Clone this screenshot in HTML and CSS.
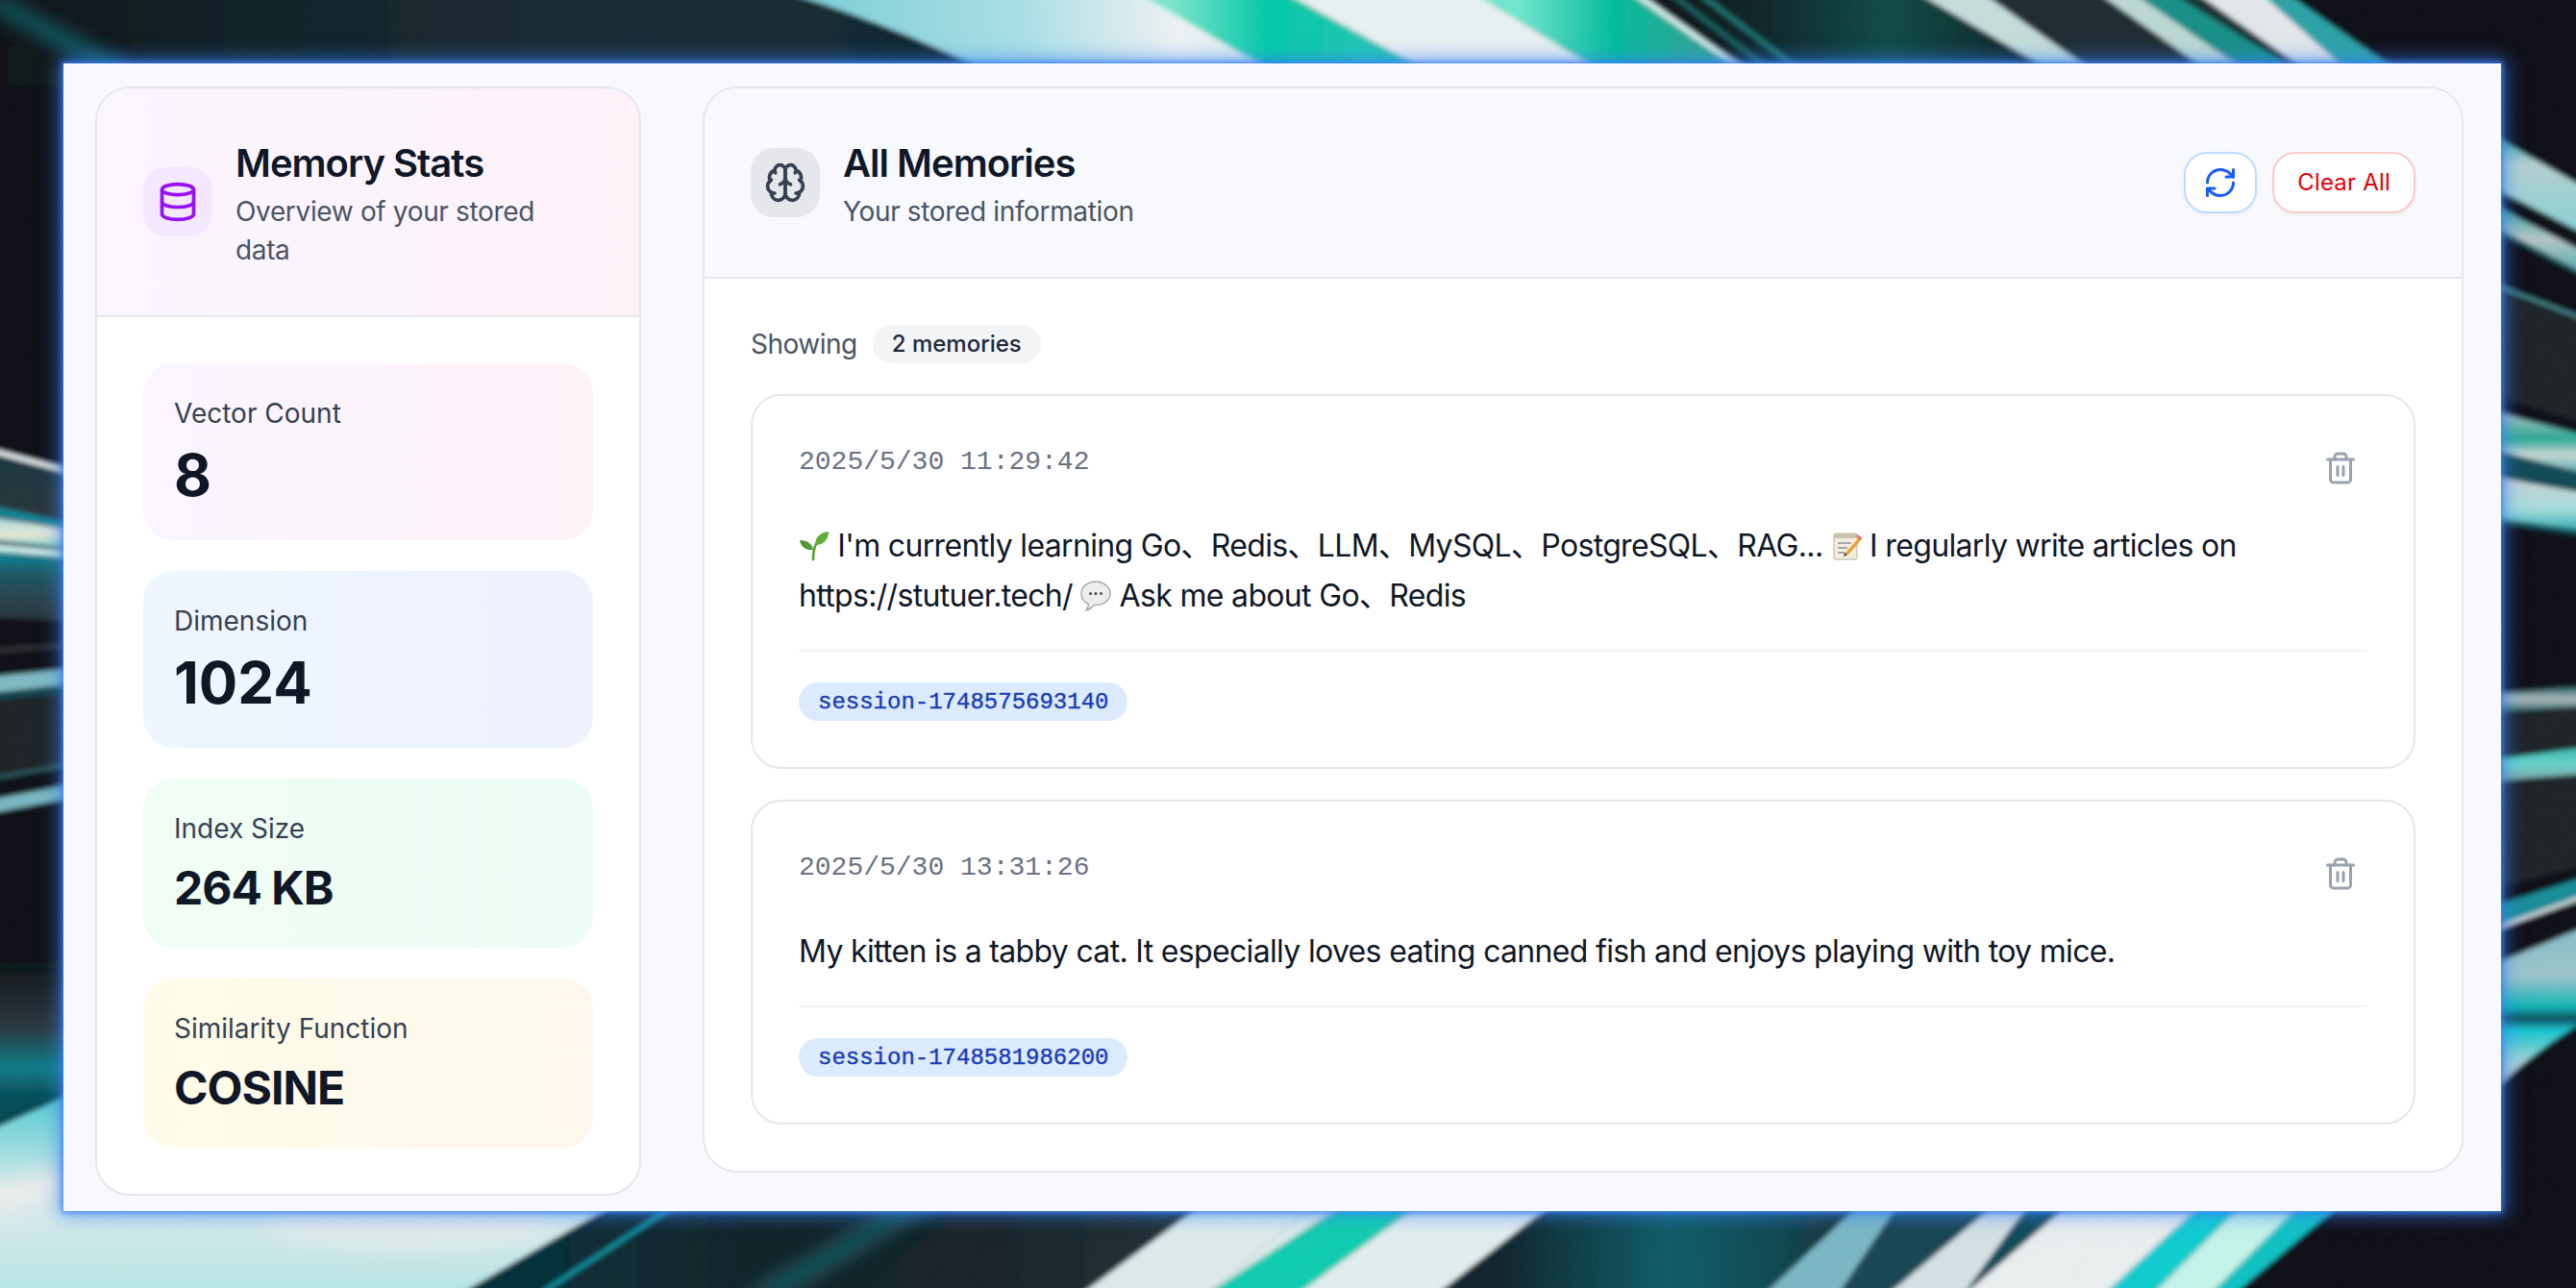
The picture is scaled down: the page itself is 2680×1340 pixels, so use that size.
FILE: index.html
```html
<!DOCTYPE html>
<html lang="en">
<head>
<meta charset="utf-8">
<title>Memories</title>
<link rel="stylesheet" href="styles.css">
</head>
<body>
<div class="stage">
  <svg class="art" viewBox="0 0 2680 1340" width="2680" height="1340" aria-hidden="true">
    <defs>
      <filter id="soft" filterUnits="userSpaceOnUse" x="-40" y="-40" width="2760" height="1420"><feGaussianBlur stdDeviation="2.4"/></filter>
      <filter id="glow" filterUnits="userSpaceOnUse" x="-100" y="-100" width="2880" height="1540"><feGaussianBlur stdDeviation="10"/></filter>
      <filter id="grain" x="0" y="0" width="100%" height="100%"><feTurbulence type="fractalNoise" baseFrequency="0.9" numOctaves="2" seed="4"/><feColorMatrix values="0 0 0 0 .5  0 0 0 0 .5  0 0 0 0 .5  1.4 0 0 0 -.3"/></filter>
      <linearGradient id="tealDark" gradientUnits="userSpaceOnUse" x1="0" y1="0" x2="1100" y2="0"><stop offset="0" stop-color="#0b1114"/><stop offset=".2" stop-color="#0f1f25"/><stop offset=".6" stop-color="#152c34"/><stop offset="1" stop-color="#0e252c"/></linearGradient>
      <linearGradient id="blade" gradientUnits="userSpaceOnUse" x1="850" y1="0" x2="1320" y2="0"><stop offset="0" stop-color="#7fd0d8"/><stop offset=".45" stop-color="#a9e0e6"/><stop offset=".8" stop-color="#eef3f4"/><stop offset="1" stop-color="#d8eef0"/></linearGradient>
      <linearGradient id="g1" gradientUnits="userSpaceOnUse" x1="1220" y1="0" x2="1420" y2="0"><stop offset="0" stop-color="#78e6cc"/><stop offset=".5" stop-color="#00c9a7"/><stop offset="1" stop-color="#1fc6b4"/></linearGradient>
      <linearGradient id="g2" gradientUnits="userSpaceOnUse" x1="1580" y1="0" x2="1760" y2="0"><stop offset="0" stop-color="#70e6ce"/><stop offset=".55" stop-color="#00bc9b"/><stop offset="1" stop-color="#2aa696"/></linearGradient>
      <linearGradient id="d1" gradientUnits="userSpaceOnUse" x1="1760" y1="0" x2="2100" y2="0"><stop offset="0" stop-color="#07181c"/><stop offset=".3" stop-color="#0a2c2f"/><stop offset=".6" stop-color="#0f4a44"/><stop offset="1" stop-color="#0d2528"/></linearGradient>
      <linearGradient id="lightLeft" gradientUnits="userSpaceOnUse" x1="0" y1="1140" x2="0" y2="1340"><stop offset="0" stop-color="#4fcad4"/><stop offset=".32" stop-color="#a9e0e2"/><stop offset=".5" stop-color="#dfeced"/><stop offset="1" stop-color="#b9e6e6"/></linearGradient>
      <linearGradient id="d2" gradientUnits="userSpaceOnUse" x1="560" y1="0" x2="1200" y2="0"><stop offset="0" stop-color="#052e38"/><stop offset=".35" stop-color="#0f2227"/><stop offset=".7" stop-color="#132126"/><stop offset="1" stop-color="#1d2d31"/></linearGradient>
      <linearGradient id="d3" gradientUnits="userSpaceOnUse" x1="1560" y1="0" x2="1950" y2="0"><stop offset="0" stop-color="#11242a"/><stop offset=".45" stop-color="#075a66"/><stop offset=".7" stop-color="#0b4b55"/><stop offset="1" stop-color="#1c2a30"/></linearGradient>
      <linearGradient id="leftBand" x1="0" y1="0" x2="0" y2="1"><stop offset="0" stop-color="#9fd8dc"/><stop offset=".55" stop-color="#ebe9d8"/><stop offset="1" stop-color="#6fc8c4"/></linearGradient>
      <linearGradient id="leftGlow" x1="0" y1="0" x2="0" y2="1"><stop offset="0" stop-color="#078a9a"/><stop offset=".35" stop-color="#1d5560"/><stop offset="1" stop-color="#2a3238"/></linearGradient>
      <linearGradient id="leftGray" x1="0" y1="0" x2="0" y2="1"><stop offset="0" stop-color="#16353e"/><stop offset="1" stop-color="#2a3338"/></linearGradient>
      <linearGradient id="lowerLeft" gradientUnits="userSpaceOnUse" x1="0" y1="1000" x2="0" y2="1176"><stop offset="0" stop-color="#0c1114"/><stop offset=".4" stop-color="#29373e"/><stop offset=".63" stop-color="#0a7c88"/><stop offset=".78" stop-color="#06505c"/><stop offset="1" stop-color="#063f4a"/></linearGradient>
      <linearGradient id="rightA" x1="0" y1="0" x2="0" y2="1"><stop offset="0" stop-color="#1f9fa2"/><stop offset=".3" stop-color="#b4cfd0"/><stop offset="1" stop-color="#86d0d4"/></linearGradient>
      <linearGradient id="rightB" x1="0" y1="0" x2="0" y2="1"><stop offset="0" stop-color="#1f9b96"/><stop offset=".5" stop-color="#b6c6c6"/><stop offset="1" stop-color="#4faab0"/></linearGradient>
      <linearGradient id="rightC" x1="0" y1="0" x2="0" y2="1"><stop offset="0" stop-color="#b8c4c4"/><stop offset=".45" stop-color="#2aa894"/><stop offset=".7" stop-color="#c8d8d6"/><stop offset="1" stop-color="#4fa8a8"/></linearGradient>
      <linearGradient id="rightD" x1="0" y1="0" x2="0" y2="1"><stop offset="0" stop-color="#c6d2d2"/><stop offset=".6" stop-color="#a8dcdc"/><stop offset="1" stop-color="#30b0b4"/></linearGradient>
      <linearGradient id="rightE" x1="0" y1="0" x2="0" y2="1"><stop offset="0" stop-color="#1c5a60"/><stop offset=".5" stop-color="#b2bcbc"/><stop offset="1" stop-color="#1c5a60"/></linearGradient>
      <linearGradient id="rightF" x1="0" y1="0" x2="0" y2="1"><stop offset="0" stop-color="#38b0a8"/><stop offset=".5" stop-color="#68d6cc"/><stop offset="1" stop-color="#7f9c9e"/></linearGradient>
      <linearGradient id="rightG" x1="0" y1="0" x2="0" y2="1"><stop offset="0" stop-color="#86bcc4"/><stop offset=".3" stop-color="#9cc4cc"/><stop offset=".48" stop-color="#0cb4b4"/><stop offset=".55" stop-color="#0f4a5c"/><stop offset=".62" stop-color="#14c6d0"/><stop offset=".8" stop-color="#9dd2d6"/><stop offset=".9" stop-color="#b8c8c8"/><stop offset="1" stop-color="#14a8c8"/></linearGradient>
    </defs>
    <g filter="url(#soft)">
      <rect x="-20" y="-20" width="2720" height="1380" fill="#0c1114"/>
      <!-- top edge -->
      <rect x="-20" y="-20" width="1120" height="110" fill="url(#tealDark)"/>
      <polygon points="-20,0 0,0 140,76 116,76" fill="#078c98" filter="url(#glow)"/>
      <path d="M770,-20 Q900,10 1060,90 L1400,90 L1300,-20 Z" fill="url(#blade)"/>
      <polygon points="1179,-10 1332,-10 1488,76 1326,76" fill="url(#g1)"/>
      <polygon points="1332,-10 1529,-10 1668,76 1488,76" fill="#e9f2f3"/>
      <polygon points="1529,-10 1691,-10 1813,76 1668,76" fill="url(#g2)"/>
      <polygon points="1691,-10 1702,-10 1823,76 1813,76" fill="#d6f2ec"/>
      <polygon points="1702,-10 1990,-10 2138,76 1823,76" fill="url(#d1)"/>
      <polygon points="1730,-10 1738,-10 1850,76 1842,76" fill="#17605e"/>
      <polygon points="1760,-10 1768,-10 1880,76 1872,76" fill="#1d7672"/>
      <polygon points="1990,-10 2059,-10 2180,76 2138,76" fill="#c4dedb"/>
      <polygon points="2059,-10 2179,-10 2300,76 2180,76" fill="#1a2a30"/>
      <polygon points="2179,-10 2215,-10 2340,76 2300,76" fill="#bcd9d3"/>
      <polygon points="2215,-10 2255,-10 2394,76 2340,76" fill="#128f87"/>
      <polygon points="2255,-10 2281,-10 2403,76 2394,76" fill="#143036"/>
      <polygon points="2281,-10 2349,-10 2445,76 2403,76" fill="#e4e8ea"/>
      <polygon points="2349,-10 2375,-10 2497,76 2445,76" fill="#2aa2a6"/>
      <!-- bottom edge -->
      <polygon points="-10,1174 80,1134 800,1134 644,1250 472,1350 -10,1350" fill="url(#lightLeft)"/>
      <polygon points="-10,1240 62,1218 72,1232 -10,1262" fill="#f1eeec" filter="url(#glow)"/>
      <ellipse cx="430" cy="1276" rx="150" ry="26" fill="#eceeed" opacity=".6" filter="url(#glow)"/>
      <polygon points="644,1250 1255,1250 1120,1350 472,1350" fill="url(#d2)"/>
      <polygon points="704,1250 712,1250 560,1350 552,1350" fill="#0d94a6"/>
      <polygon points="940,1250 980,1250 810,1350 770,1350" fill="#155860" filter="url(#glow)"/>
      <polygon points="1255,1250 1372,1250 1250,1350 1120,1350" fill="#dcecec"/>
      <polygon points="1372,1250 1403,1250 1250,1350" fill="#dcecec"/>
      <polygon points="1403,1250 1481,1250 1345,1350 1250,1350" fill="#0fcdb0"/>
      <polygon points="1481,1250 1618,1250 1490,1350 1345,1350" fill="#e2efef"/>
      <polygon points="1618,1250 1968,1250 1832,1350 1490,1350" fill="url(#d3)"/>
      <polygon points="1938,1250 1977,1250 1910,1350 1832,1350" fill="#79b7c4"/>
      <polygon points="1977,1250 2079,1250 1960,1350 1910,1350" fill="#124552"/>
      <polygon points="2079,1250 2113,1250 2040,1350 1960,1350" fill="#d4e2e5"/>
      <polygon points="2113,1250 2156,1250 2040,1350" fill="#0f4a58"/>
      <polygon points="2156,1250 2293,1250 2185,1350 2040,1350" fill="#eaeff0"/>
      <polygon points="2293,1250 2336,1250 2236,1350 2185,1350" fill="#10ccd0"/>
      <polygon points="2336,1250 2396,1250 2296,1350 2236,1350" fill="#c4f4e8"/>
      <polygon points="2396,1250 2438,1250 2320,1350 2296,1350" fill="#10c2c4"/>
      <!-- left edge -->
      <polygon points="-10,472 80,492 80,545 -10,530" fill="url(#leftGray)"/>
      <polygon points="-10,466 80,490 80,495 -10,471" fill="#eef6f6"/>
      <polygon points="-10,526 80,545 80,552 -10,536" fill="#0a8496"/>
      <polygon points="-10,538 80,552 80,571 -10,562" fill="url(#leftBand)"/>
      <polygon points="-10,562 80,571 80,575 -10,566" fill="#043a40"/>
      <polygon points="-10,566 80,574 80,581 -10,573" fill="#cdeeee"/>
      <polygon points="-10,573 80,581 80,646 -10,642" fill="url(#leftGlow)"/>
      <polygon points="-10,674 80,668 80,673 -10,680" fill="#2a2a32"/>
      <polygon points="-10,704 80,695 80,711 -10,721" fill="#7fbac2"/>
      <polygon points="-10,721 80,711 80,720 -10,729" fill="#07444c"/>
      <polygon points="-10,729 80,720 80,796 -10,806" fill="#1e2328"/>
      <polygon points="-10,808 80,792 80,796 -10,812" fill="#2a5a5e"/>
      <polygon points="-10,832 80,815 80,829 -10,846" fill="#78b8c0"/>
      <polygon points="-10,1000 80,1000 80,1136 -10,1176" fill="url(#lowerLeft)"/>
      <!-- right edge -->
      <polygon points="2590,139 2690,196 2690,244 2590,193" fill="url(#rightA)"/>
      <polygon points="2590,211 2690,263 2690,285 2590,233" fill="url(#rightB)"/>
      <polygon points="2590,234 2690,286 2690,289 2590,237" fill="#14666c"/>
      <polygon points="2590,293 2690,331 2690,334 2590,296" fill="#4f9ea2"/>
      <polygon points="2590,296 2690,334 2690,440 2590,410" fill="#1a2127"/>
      <polygon points="2590,427 2690,453 2690,493 2590,467" fill="url(#rightC)"/>
      <polygon points="2590,467 2690,493 2690,512 2590,495" fill="#0b4a54"/>
      <polygon points="2590,495 2690,513 2690,552 2590,538" fill="url(#rightD)"/>
      <polygon points="2590,538 2690,552 2690,557 2590,543" fill="#0c5a60"/>
      <polygon points="2590,722 2690,714 2690,735 2590,741" fill="url(#rightE)"/>
      <polygon points="2590,742 2690,735 2690,900 2590,925" fill="#1a2025"/>
      <polygon points="2590,791 2690,777 2690,805 2590,813" fill="url(#rightF)"/>
      <polygon points="2590,944 2690,912 2690,930 2590,966" fill="#138d98"/>
      <polygon points="2590,966 2690,930 2690,934 2590,970" fill="#dfe8ea"/>
      <path d="M2590,1005 L2690,964 L2690,1062 Q2640,1090 2590,1138 Z" fill="url(#rightG)"/>
    </g>
    <rect x="0" y="0" width="2680" height="1340" filter="url(#grain)" opacity=".07"/>
  </svg>

  <main class="window">
    <aside class="card side">
      <header class="card-head head-purple">
        <span class="head-icon icon-purple">
          <svg class="ic44" viewBox="0 0 24 24"><ellipse cx="12" cy="5" rx="9" ry="3"/><path d="M3 5V19A9 3 0 0 0 21 19V5"/><path d="M3 12A9 3 0 0 0 21 12"/></svg>
        </span>
        <div class="head-text">
          <h2>Memory Stats</h2>
          <p>Overview of your stored data</p>
        </div>
      </header>
      <div class="stats">
        <div class="stat stat-pink"><div class="stat-label">Vector Count</div><div class="stat-value big">8</div></div>
        <div class="stat stat-blue"><div class="stat-label">Dimension</div><div class="stat-value big">1024</div></div>
        <div class="stat stat-green"><div class="stat-label">Index Size</div><div class="stat-value">264 KB</div></div>
        <div class="stat stat-amber"><div class="stat-label">Similarity Function</div><div class="stat-value">COSINE</div></div>
      </div>
    </aside>

    <section class="card list">
      <header class="card-head head-gray">
        <span class="head-icon icon-gray">
          <svg class="ic44" viewBox="0 0 24 24"><path d="M12 5a3 3 0 1 0-5.997.125 4 4 0 0 0-2.526 5.77 4 4 0 0 0 .556 6.588A4 4 0 1 0 12 18Z"/><path d="M12 5a3 3 0 1 1 5.997.125 4 4 0 0 1 2.526 5.77 4 4 0 0 1-.556 6.588A4 4 0 1 1 12 18Z"/><path d="M15 13a4.5 4.5 0 0 1-3-4 4.5 4.5 0 0 1-3 4"/><path d="M17.599 6.5a3 3 0 0 0 .399-1.375"/><path d="M6.003 5.125A3 3 0 0 0 6.401 6.5"/><path d="M3.477 10.896a4 4 0 0 1 .585-.396"/><path d="M19.938 10.5a4 4 0 0 1 .585.396"/><path d="M6 18a4 4 0 0 1-1.967-.516"/><path d="M19.967 17.484A4 4 0 0 1 18 18"/></svg>
        </span>
        <div class="head-text">
          <h2>All Memories</h2>
          <p>Your stored information</p>
        </div>
        <div class="actions">
          <button class="btn btn-refresh" type="button" aria-label="Refresh">
            <svg class="ic36" viewBox="0 0 24 24"><path d="M3 12a9 9 0 0 1 9-9 9.75 9.75 0 0 1 6.74 2.74L21 8"/><path d="M21 3v5h-5"/><path d="M21 12a9 9 0 0 1-9 9 9.75 9.75 0 0 1-6.74-2.74L3 16"/><path d="M8 16H3v5"/></svg>
          </button>
          <button class="btn btn-clear" type="button">Clear All</button>
        </div>
      </header>
      <div class="list-body">
        <div class="count"><span>Showing</span><span class="pill">2 memories</span></div>

        <article class="memory">
          <div class="memory-top">
            <time class="stamp">2025/5/30 11:29:42</time>
            <button class="del" type="button" aria-label="Delete">
              <svg class="ic36" viewBox="0 0 24 24"><path d="M3 6h18"/><path d="M19 6v14c0 1-1 2-2 2H7c-1 0-2-1-2-2V6"/><path d="M8 6V4c0-1 1-2 2-2h4c1 0 2 1 2 2v2"/><line x1="10" x2="10" y1="11" y2="17"/><line x1="14" x2="14" y1="11" y2="17"/></svg>
            </button>
          </div>
          <p class="memory-text"><svg class="emoji" viewBox="0 0 32 32"><path d="M15 30C15 24 15 20 18 14" fill="none" stroke="#5c9e2e" stroke-width="2.6" stroke-linecap="round"/><path d="M17 15C17 7 22 2 31 1 31 9 26 15 17 15Z" fill="#5fae37"/><path d="M15 20C14 14 9 10 1 10 2 17 8 21 15 20Z" fill="#4d9a2c"/></svg> I'm currently learning Go、Redis、LLM、MySQL、PostgreSQL、RAG... <svg class="emoji" viewBox="0 0 32 32"><rect x="3" y="3" width="24" height="27" rx="2" fill="#f4efdc" stroke="#b9b29a"/><rect x="3" y="3" width="24" height="5" fill="#c9c3ae"/><path d="M7 13h14M7 18h10M7 23h8" stroke="#8b93a5" stroke-width="1.6"/><path d="M30 6L17 21l-4 6 6-3L32 9Z" fill="#e8a33a"/><path d="M13 27l1.5-4 2.5 2.5Z" fill="#4a4a4a"/><path d="M28 4l4 4-2 2-4-4Z" fill="#e86a5c"/></svg> I regularly write articles on https://stutuer.tech/ <svg class="emoji" viewBox="0 0 32 32"><path d="M16 1C7.5 1 1 6.5 1 13.5c0 5 3 9 7.5 11 0 2-1 4.5-2.500 6.500 3.500-1 6.500-3 8.500-5.500h1.500c8.500 0 15-5.500 15-12S24.500 1 16 1Z" fill="#eceded" stroke="#a4a8aa" stroke-width="1.400"/><circle cx="10.500" cy="13.500" r="1.500" fill="#4a4a4a"/><circle cx="16" cy="13.500" r="1.500" fill="#4a4a4a"/><circle cx="21.500" cy="13.500" r="1.500" fill="#4a4a4a"/></svg> Ask me about Go、Redis</p>
          <div class="memory-foot"><span class="tag">session-1748575693140</span></div>
        </article>

        <article class="memory">
          <div class="memory-top">
            <time class="stamp">2025/5/30 13:31:26</time>
            <button class="del" type="button" aria-label="Delete">
              <svg class="ic36" viewBox="0 0 24 24"><path d="M3 6h18"/><path d="M19 6v14c0 1-1 2-2 2H7c-1 0-2-1-2-2V6"/><path d="M8 6V4c0-1 1-2 2-2h4c1 0 2 1 2 2v2"/><line x1="10" x2="10" y1="11" y2="17"/><line x1="14" x2="14" y1="11" y2="17"/></svg>
            </button>
          </div>
          <p class="memory-text">My kitten is a tabby cat. It especially loves eating canned fish and enjoys playing with toy mice.</p>
          <div class="memory-foot"><span class="tag">session-1748581986200</span></div>
        </article>
      </div>
    </section>
  </main>
</div>
</body>
</html>
```
FILE: styles.css
```css
* { box-sizing: border-box; }
html, body { margin: 0; padding: 0; }
body {
  width: 2680px;
  height: 1340px;
  overflow: hidden;
  background: #0c1114;
  font-family: Inter, "Noto Sans CJK SC", sans-serif;
  color: #101828;
}
h2, p { margin: 0; }
button { font: inherit; cursor: pointer; }

.stage {
  position: relative;
  width: 2680px;
  height: 1340px;
  padding: 66px 78px 80px 66px;
}
.art { position: absolute; left: 0; top: 0; display: block; }

.window {
  position: relative;
  display: flex;
  align-items: flex-start;
  gap: 64px;
  height: 1194px;
  padding: 24px 39px 0 33px;
  background: #f8f9fd;
  box-shadow: 0 0 5px 2px rgba(59, 130, 246, .75), 0 0 18px 5px rgba(59, 130, 246, .65);
}

.card {
  background: #fff;
  border: 2px solid #e5e7eb;
  border-radius: 36px;
  overflow: hidden;
}
.side { flex: 0 0 568px; }
.list { flex: 1 1 auto; min-width: 0; }

.card-head {
  display: flex;
  align-items: center;
  gap: 24px;
  padding: 48px;
  border-bottom: 2px solid #e5e7eb;
}
.head-purple { background: linear-gradient(90deg, #faf5ff, #fdf2f8); }
.head-gray { background: #f8f9fd; }
.head-icon {
  flex: none;
  display: flex;
  align-items: center;
  justify-content: center;
  width: 72px;
  height: 72px;
  border-radius: 24px;
}
.icon-purple { background: #f3e8ff; color: #9810fa; }
.icon-gray { background: #e5e7eb; color: #364153; }

.ic44, .ic36 {
  display: block;
  fill: none;
  stroke: currentColor;
  stroke-width: 2;
  stroke-linecap: round;
  stroke-linejoin: round;
}
.ic44 { width: 44px; height: 44px; }
.ic36 { width: 36px; height: 36px; }

.head-text { flex: 1 1 auto; min-width: 0; }
.head-text h2 { padding-top: 2px; font-size: 40px; line-height: 56px; font-weight: 600; letter-spacing: -1px; color: #101828; }
.head-text p { margin-top: 2px; font-size: 28px; line-height: 40px; letter-spacing: -.35px; color: #4a5565; }

.actions { display: flex; gap: 16px; }
.btn {
  display: flex;
  align-items: center;
  height: 64px;
  background: #fff;
  border-radius: 24px;
  border: 2px solid;
  box-shadow: 0 2px 4px rgba(0, 0, 0, .05);
}
.btn-refresh { padding: 0 18px; border-color: #bedbff; color: #155dfc; }
.btn-clear {
  padding: 0 24px;
  border-color: #ffc9c9;
  color: #e7000b;
  font-size: 24px;
  line-height: 32px;
  font-weight: 400;
  letter-spacing: .2px;
}

.stats { display: flex; flex-direction: column; gap: 32px; padding: 48px; }
.stat { padding: 32px; border-radius: 32px; }
.stat-pink { background: linear-gradient(90deg, #faf5ff, #fdf2f8); }
.stat-blue { background: linear-gradient(90deg, #eff6ff, #eef2ff); }
.stat-green { background: linear-gradient(90deg, #f0fdf4, #ecfdf5); }
.stat-amber { background: linear-gradient(90deg, #fefce8, #fff7ed); }
.stat-label { margin-bottom: 8px; font-size: 28px; line-height: 40px; font-weight: 400; color: #364153; }
.stat-value { padding-top: 2px; margin-bottom: -2px; font-size: 48px; line-height: 64px; font-weight: 700; letter-spacing: -1px; color: #101828; }
.stat-value.big { padding-top: 0; margin-bottom: 0; font-size: 60px; line-height: 72px; letter-spacing: 0; }

.list-body { display: flex; flex-direction: column; gap: 32px; padding: 48px; }
.count { display: flex; align-items: center; gap: 16px; font-size: 28px; line-height: 40px; letter-spacing: -.5px; color: #4a5565; }
.pill {
  padding: 4px 20px;
  border-radius: 20px;
  background: #f3f4f6;
  color: #1e2939;
  font-size: 24px;
  line-height: 32px;
  font-weight: 500;
  letter-spacing: 0;
}

.memory { padding: 48px; background: #fff; border: 2px solid #e5e7eb; border-radius: 32px; }
.memory-top { display: flex; justify-content: space-between; align-items: flex-start; margin-bottom: 30px; }
.stamp { margin-top: 1px; font-family: "Liberation Mono", monospace; font-size: 28px; line-height: 40px; color: #6a7282; }
.del { display: block; margin: 1px 2px -1px 0; padding: 8px; background: none; border: 0; border-radius: 16px; color: #99a1af; }
.memory-text { font-size: 32px; line-height: 52px; letter-spacing: -.67px; color: #101828; }
.emoji { display: inline-block; width: 32px; height: 32px; vertical-align: -5px; }
.memory-foot { margin-top: 30px; padding-top: 32px; border-top: 2px solid #f3f4f6; display: flex; }
.tag {
  padding: 5px 20px 3px;
  border-radius: 20px;
  background: #dbeafe;
  color: #193cb8;
  font-family: "Liberation Mono", monospace;
  font-size: 24px;
  line-height: 32px;
  -webkit-text-stroke: .4px #193cb8;
}
```
